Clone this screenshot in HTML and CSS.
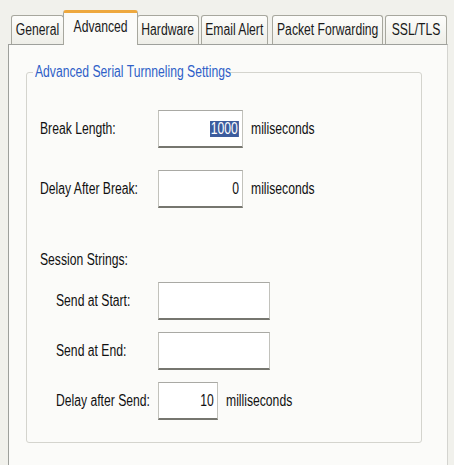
FILE: index.html
```html
<!DOCTYPE html>
<html>
<head>
<meta charset="utf-8">
<link rel="stylesheet" href="styles.css">
</head>
<body>
<div class="window">
  <div class="tabs">
    <div class="tab t-general"><span class="tx">General</span></div>
    <div class="tab t-advanced selected"><span class="tx">Advanced</span></div>
    <div class="tab t-hardware"><span class="tx">Hardware</span></div>
    <div class="tab t-email"><span class="tx">Email Alert</span></div>
    <div class="tab t-packet"><span class="tx">Packet Forwarding</span></div>
    <div class="tab t-ssl"><span class="tx">SSL/TLS</span></div>
  </div>
  <div class="panel">
    <fieldset class="group">
      <legend class="legend"><span class="tx">Advanced Serial Turnneling Settings</span></legend>
      <div class="row row-break">
        <span class="label"><span class="tx">Break Length:</span></span>
        <div class="field f-mid"><span class="tx sel">1000</span></div>
        <span class="unit"><span class="tx">miliseconds</span></span>
      </div>
      <div class="row row-delay">
        <span class="label"><span class="tx">Delay After Break:</span></span>
        <div class="field f-mid"><span class="tx">0</span></div>
        <span class="unit"><span class="tx">miliseconds</span></span>
      </div>
      <div class="section"><span class="tx">Session Strings:</span></div>
      <div class="row row-start">
        <span class="label sub"><span class="tx">Send at Start:</span></span>
        <div class="field f-wide"></div>
      </div>
      <div class="row row-end">
        <span class="label sub"><span class="tx">Send at End:</span></span>
        <div class="field f-wide"></div>
      </div>
      <div class="row row-send">
        <span class="label sub"><span class="tx">Delay after Send:</span></span>
        <div class="field f-small"><span class="tx">10</span></div>
        <span class="unit"><span class="tx">milliseconds</span></span>
      </div>
    </fieldset>
  </div>
</div>
</body>
</html>
```
FILE: styles.css
```css
* { box-sizing: border-box; }
html, body {
  margin: 0;
  padding: 0;
  background: #f1f1ec;
  width: 454px;
  height: 465px;
  overflow: hidden;
}
body {
  font-family: "Liberation Sans", Arial, sans-serif;
  font-size: 16px;
  color: #111111;
}
.tx {
  display: inline-block;
  white-space: nowrap;
  transform: scaleX(0.76);
  transform-origin: left center;
}
.window {
  display: flex;
  flex-direction: column;
  height: 465px;
}
.tabs {
  display: flex;
  align-items: flex-end;
  padding: 10px 0 0 11px;
  height: 45px;
  position: relative;
  z-index: 2;
}
.tab {
  height: 29px;
  border: 1px solid #a7a79e;
  border-bottom: none;
  border-radius: 3px 3px 0 0;
  background: linear-gradient(#fdfdfb, #eeeee8);
  display: flex;
  align-items: center;
  justify-content: center;
  overflow: hidden;
  color: #1a1a1a;
  margin-bottom: 1px;
}
.tab .tx { transform-origin: center center; }
.tab.selected {
  height: 35px;
  margin-bottom: 0;
  background: #fbfbf9;
  border-top: 3px solid #eea83e;
  padding-bottom: 4px;
  margin-left: -1px;
  margin-right: -1px;
}
.t-general { width: 53px; }
.t-advanced { width: 75px; }
.t-hardware { width: 62px; margin-right: 2px; }
.t-email { width: 67px; margin-right: 4px; }
.t-packet { width: 111px; margin-right: 2px; }
.t-ssl { width: 62px; }
.panel {
  flex: 1;
  margin: -1px 6px 0 8px;
  border: 1px solid #9ea09c;
  border-right-color: #d4d4d0;
  border-bottom: none;
  background: #fbfbf9;
  padding: 19px 0 0 17px;
}
.group {
  width: 396px;
  height: 379px;
  margin: 0;
  padding: 0 0 0 13px;
  border: 1px solid #d4d4ce;
  border-radius: 3px;
}
.legend {
  color: #2f5fc8;
  margin-left: -7px;
  padding: 0 2px;
  line-height: 16px;
  width: 196px;
}
.row {
  display: flex;
  align-items: center;
}
.label {
  width: 118px;
  flex: none;
}
.label.sub {
  padding-left: 16px;
}
.field {
  height: 38px;
  border: 1px solid #c2c2bc;
  border-top-color: #a9a9a4;
  border-bottom: 2px solid #76766f;
  background: #ffffff;
  display: flex;
  align-items: center;
  justify-content: flex-end;
  padding-right: 3px;
  flex: none;
}
.field .tx { transform-origin: right center; }
.f-mid { width: 85px; }
.f-wide { width: 112px; }
.f-small { width: 60px; }
.sel {
  background: #3b5b9d;
  color: #ffffff;
  line-height: 16px;
  padding: 0 1px;
}
.unit {
  margin-left: 8px;
}
.row-break { margin-top: 30px; }
.row-delay { margin-top: 22px; }
.section { margin-top: 44px; line-height: 16px; }
.row-start { margin-top: 14px; }
.row-end { margin-top: 12px; }
.row-send { margin-top: 12px; }
```
